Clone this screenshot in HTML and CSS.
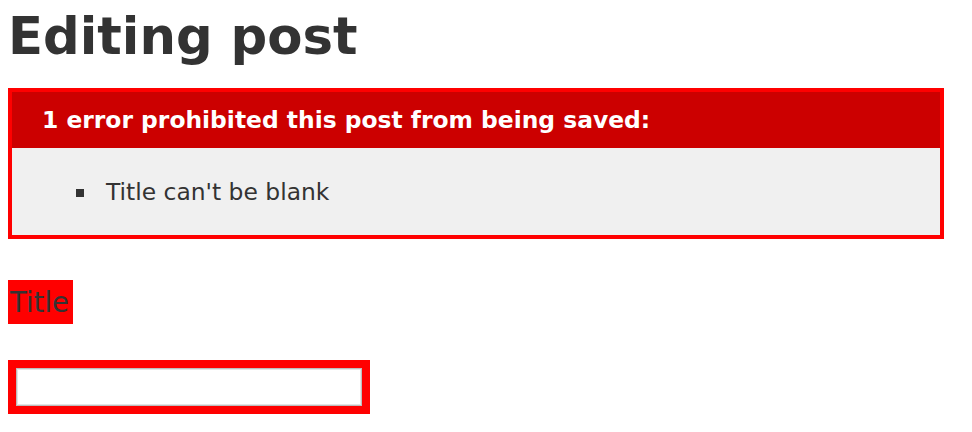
FILE: index.html
```html
<!DOCTYPE html>
<html>
<head>
<meta charset="utf-8">
<link rel="stylesheet" href="styles.css">
</head>
<body>
<h1 class="page-title">Editing post</h1>
<div class="error-box">
  <h2 class="error-head">1 error prohibited this post from being saved:</h2>
  <ul class="error-list">
    <li class="error-item">Title can't be blank</li>
  </ul>
</div>
<div class="field">
  <div class="field-error label-wrap"><label class="field-label" for="post_title">Title</label></div>
  <div class="field-error input-wrap"><input class="field-input" id="post_title" type="text"></div>
</div>
</body>
</html>
```

FILE: styles.css
```css
html, body {
  background: #fff;
}
body {
  margin: 8px;
  font-family: "DejaVu Sans", Verdana, sans-serif;
  color: #333;
}
.page-title {
  margin: 0;
  font-size: 51.3px;
  line-height: 56px;
  font-weight: bold;
  color: #333;
}
.error-box {
  box-sizing: border-box;
  width: 936px;
  margin-top: 24px;
  border: 4px solid #ff0000;
  background: #f0f0f0;
}
.error-head {
  margin: 0;
  padding: 10px 10px 10px 30px;
  background: #cc0000;
  color: #fff;
  font-size: 23.4px;
  line-height: 36px;
  font-weight: bold;
}
.error-list {
  list-style: none;
  margin: 0;
  padding: 29px 0 28px 64px;
}
.error-item {
  display: flex;
  align-items: center;
  gap: 22px;
  font-size: 23.4px;
  line-height: 30px;
}
.error-item::before {
  content: "";
  width: 8px;
  height: 8px;
  background: #333;
  flex: none;
  position: relative;
  top: 1px;
}
.field {
  margin-top: 41px;
}
.field-error {
  background: #ff0000;
  width: fit-content;
}
.label-wrap {
  padding: 2px 4px 2px 2px;
}
.field-label {
  display: block;
  font-size: 27.5px;
  line-height: 40px;
  color: #333;
}
.input-wrap {
  margin-top: 36px;
  padding: 8px;
}
.field-input {
  display: block;
  box-sizing: border-box;
  width: 346px;
  height: 38px;
  margin: 0;
  padding: 0 4px;
  border: 1px solid #bdbdbd;
  box-shadow: inset 0 0 0 1px #e4e4e4;
  background: #fff;
  outline: none;
}
```
